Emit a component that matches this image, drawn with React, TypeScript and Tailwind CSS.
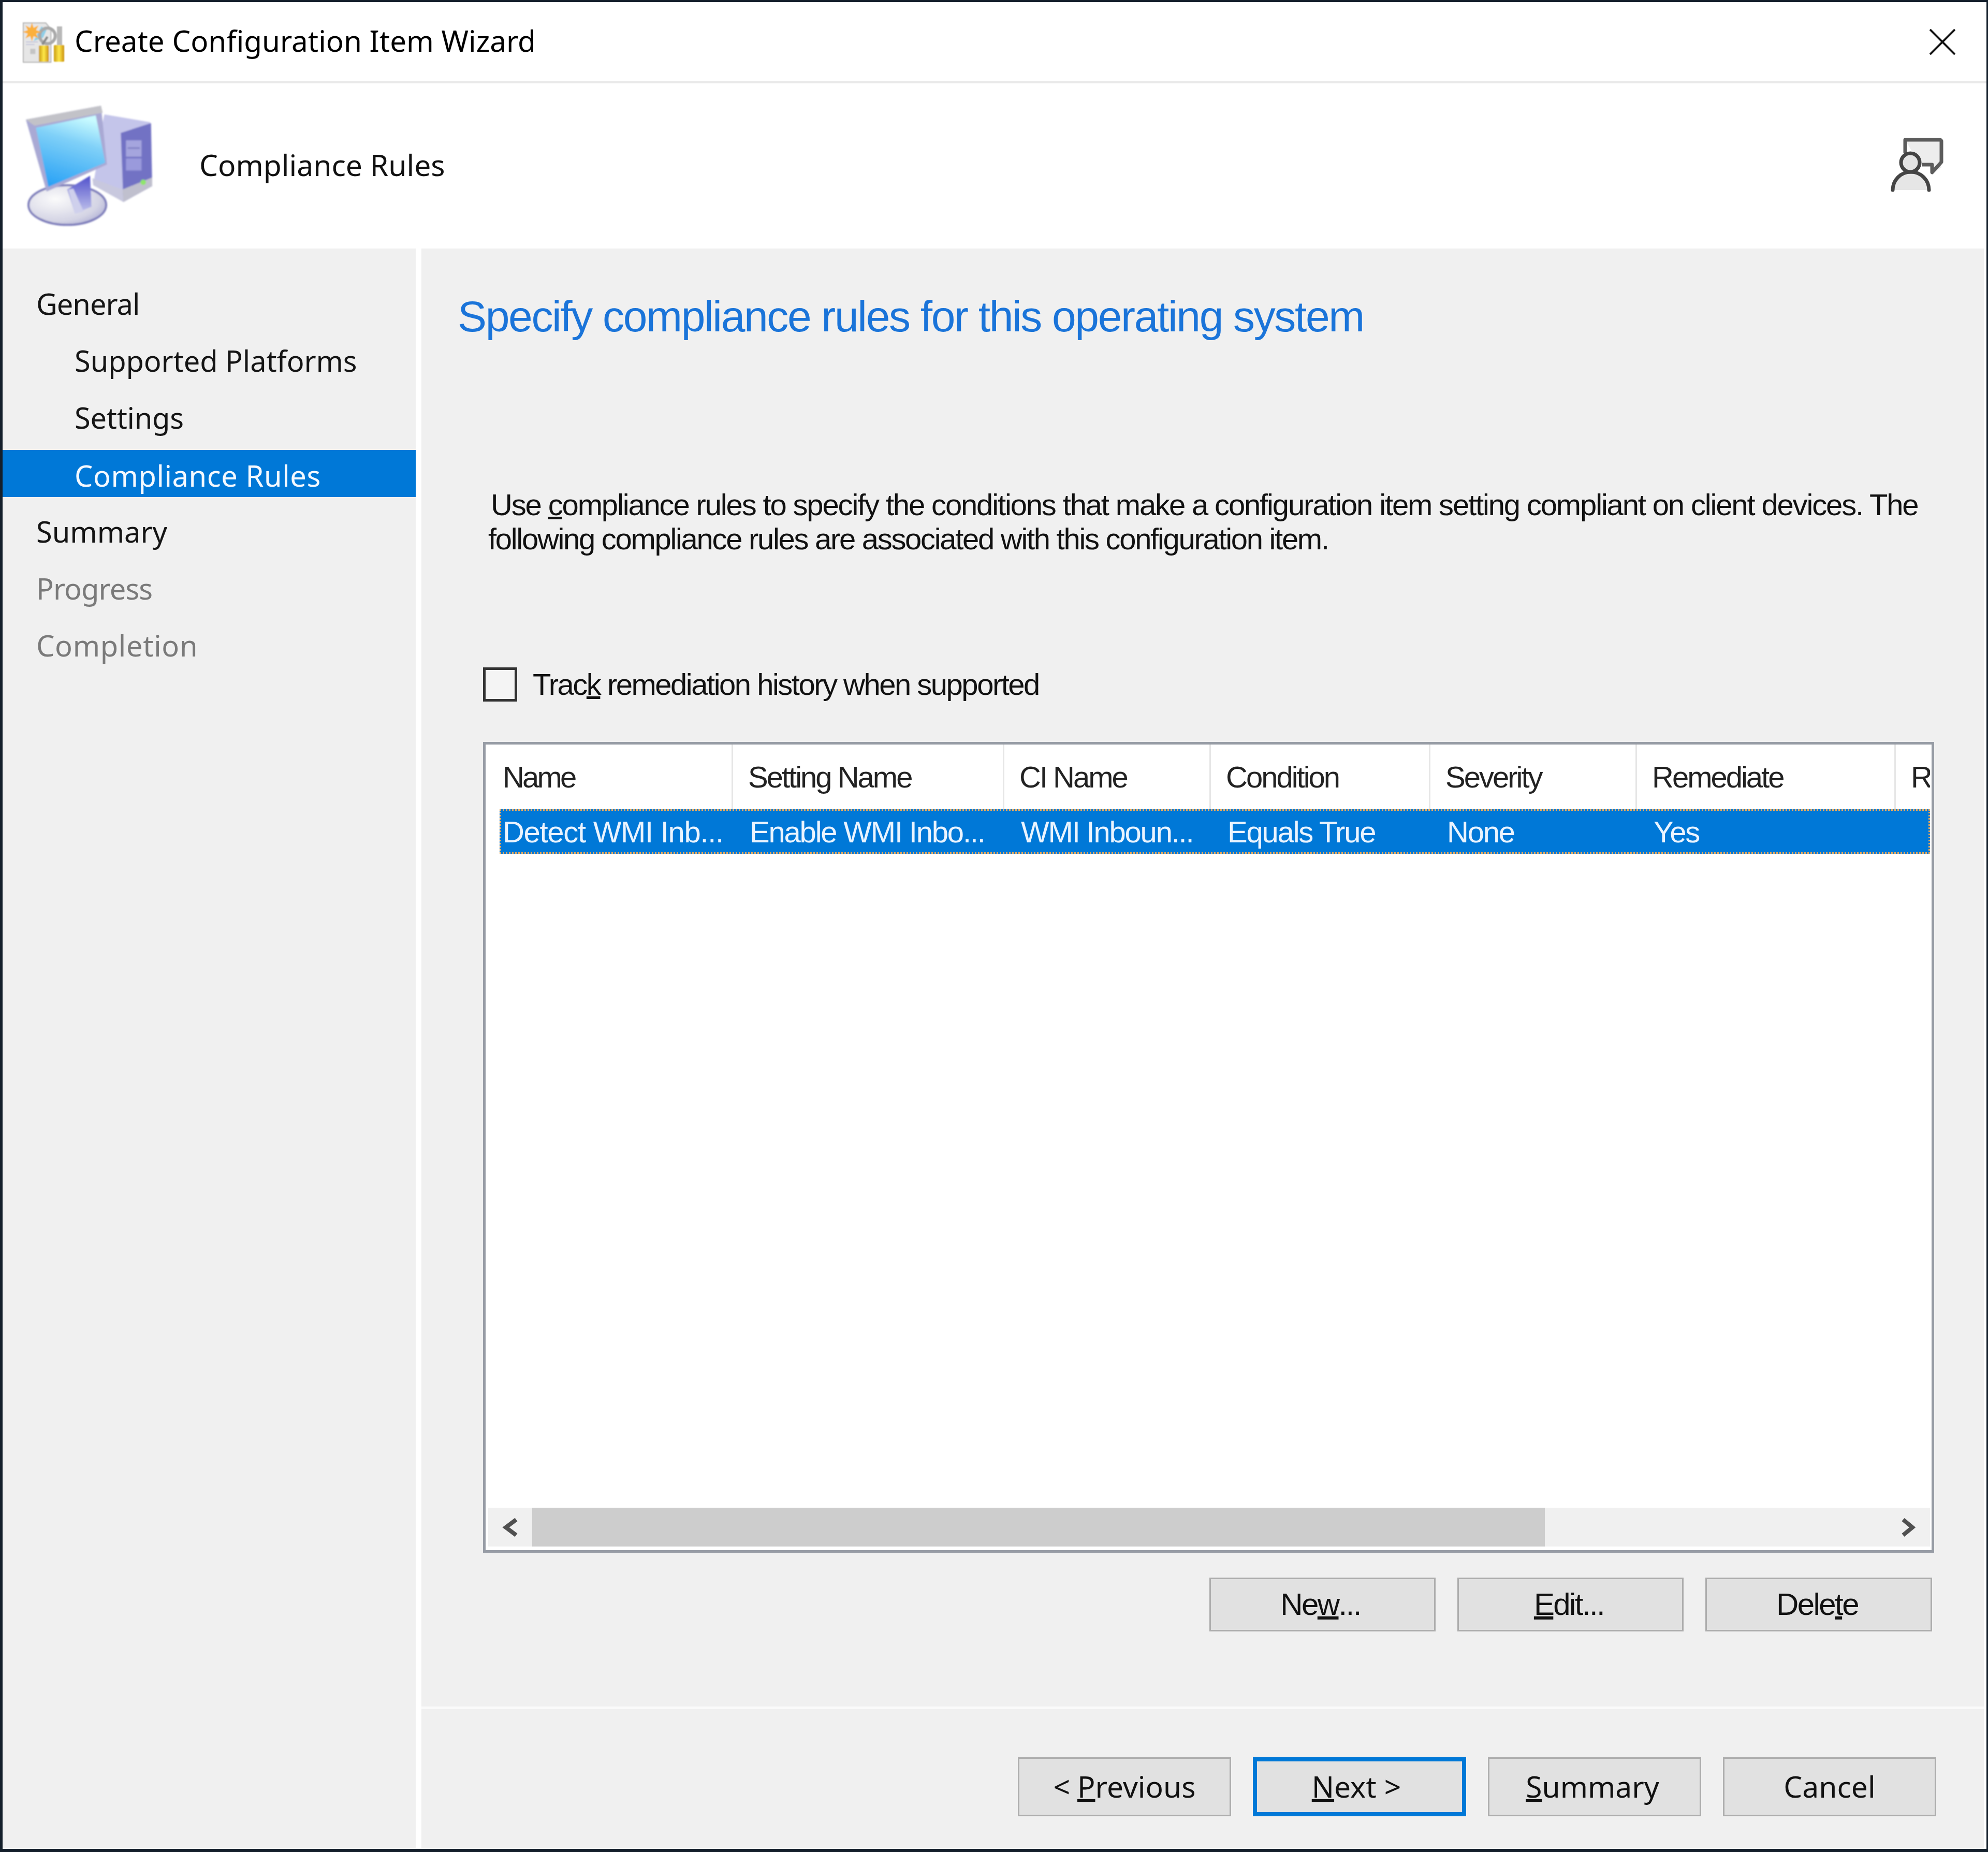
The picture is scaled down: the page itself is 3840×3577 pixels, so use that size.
import { ReactNode } from "react";

const SEGOE = "font-['Noto_Sans',sans-serif]";
const ARIAL = "font-['Liberation_Sans',Arial,sans-serif]";

const STEPS = [
  { label: "General", indent: false, state: "done", track: "tracking-[-1px]" },
  { label: "Supported Platforms", indent: true, state: "done", track: "tracking-[-0.1px]" },
  { label: "Settings", indent: true, state: "done", track: "tracking-[-0.3px]" },
  { label: "Compliance Rules", indent: true, state: "active", track: "tracking-[0.6px]" },
  { label: "Summary", indent: false, state: "done", track: "" },
  { label: "Progress", indent: false, state: "off", track: "tracking-[-0.9px]" },
  { label: "Completion", indent: false, state: "off", track: "tracking-[0.7px]" },
];

const COLUMNS = [
  { head: "Name", value: "Detect WMI Inb..." },
  { head: "Setting Name", value: "Enable WMI Inbo..." },
  { head: "CI Name", value: "WMI Inboun..." },
  { head: "Condition", value: "Equals True" },
  { head: "Severity", value: "None" },
  { head: "Remediate", value: "Yes" },
  { head: "R", value: "" },
];

function AppIcon() {
  return (
    <svg viewBox="0 0 330 300" className="w-[110px] h-[100px] shrink-0">
      <defs>
        <filter id="soft"><feGaussianBlur stdDeviation="3" /></filter>
        <linearGradient id="gold" x1="0" y1="0" x2="1" y2="0">
          <stop offset="0" stopColor="#c99a10" />
          <stop offset="0.5" stopColor="#ffe94a" />
          <stop offset="1" stopColor="#c98f10" />
        </linearGradient>
      </defs>
      <g filter="url(#soft)">
        <path d="M45 40H175L205 75V268H45Z" fill="#e6e6e6" stroke="#b4b4b4" strokeWidth="6" />
        <rect x="85" y="190" width="30" height="30" fill="#c4c4c4" />
        <path d="M60 150h70M60 165h50" stroke="#b9bcd8" strokeWidth="5" />
        <path d="M150 60l30 20-20 45-55 20z" fill="#8ecfe8" />
        <circle cx="185" cy="115" r="45" fill="none" stroke="#a9a9a9" strokeWidth="18" />
        <path d="M185 120l-30 45" stroke="#8a8a8a" strokeWidth="14" />
        <path d="M95 38l10 30 28-14-14 28 30 10-30 10 14 28-28-14-10 30-10-30-28 14 14-28-30-10 30-10-14-28 28 14z" fill="#fbb03c" />
        <rect x="240" y="60" width="30" height="120" fill="#b8b8b8" />
        <rect x="135" y="170" width="58" height="95" rx="6" fill="url(#gold)" />
        <rect x="222" y="168" width="60" height="97" rx="6" fill="url(#gold)" />
      </g>
    </svg>
  );
}

function ComputerIcon() {
  return (
    <svg viewBox="0 0 870 810" className="w-[290px] h-[270px] shrink-0">
      <defs>
        <filter id="soft2"><feGaussianBlur stdDeviation="5" /></filter>
        <linearGradient id="screen" x1="0.6" y1="0" x2="0.3" y2="1">
          <stop offset="0" stopColor="#c9fbff" />
          <stop offset="0.35" stopColor="#7fd0f8" />
          <stop offset="1" stopColor="#2aa2f5" />
        </linearGradient>
        <linearGradient id="neck" x1="0" y1="0" x2="0" y2="1">
          <stop offset="0" stopColor="#5050cc" />
          <stop offset="1" stopColor="#c4c6ec" />
        </linearGradient>
        <radialGradient id="base" cx="0.35" cy="0.35" r="0.8">
          <stop offset="0" stopColor="#fbfbfb" />
          <stop offset="0.7" stopColor="#d4d4e4" />
          <stop offset="1" stopColor="#a9a9d4" />
        </radialGradient>
      </defs>
      <g filter="url(#soft2)">
        <ellipse cx="300" cy="630" rx="225" ry="115" fill="url(#base)" stroke="#7c7cba" strokeWidth="12" />
        <path d="M500 170L515 105 780 150 790 520 625 612 450 510 470 400Z" fill="#c4c5ea" />
        <path d="M610 212L785 155 792 520 625 612Z" fill="#7272c4" />
        <path d="M445 475L620 540 625 612 450 515Z" fill="#c8c8de" />
        <path d="M620 540L792 470 792 520 625 612Z" fill="#c0c0ce" />
        <rect x="640" y="255" width="90" height="95" fill="#a5a5de" />
        <rect x="640" y="360" width="90" height="70" fill="#9a9adc" />
        <path d="M650 300h70" stroke="#7a7ac0" strokeWidth="8" />
        <circle cx="740" cy="498" r="16" fill="#8fe66a" />
        <path d="M300 540L432 460 440 640 345 680Z" fill="url(#neck)" />
        <path d="M305 540L345 680 395 668 335 535Z" fill="#cfd0ec" />
        <path d="M60 135L495 55 530 395 180 552Z" fill="#a9a9d4" />
        <path d="M60 135L495 55 505 95 110 170Z" fill="#c2c2c8" />
        <path d="M118 182L465 110 520 385 190 525Z" fill="url(#screen)" />
      </g>
    </svg>
  );
}

function AssistIcon() {
  return (
    <svg viewBox="0 0 110 110" className="w-[110px] h-[110px] shrink-0" fill="none">
      <path d="M30 7H100V60L82 74V55H58" fill="#ededed" />
      <path d="M30 32V7H97a3 3 0 0 1 3 3V50L82 70V55H62" stroke="#5c5c5c" strokeWidth="7" strokeLinejoin="round" />
      <path d="M6 104a35 35 0 0 1 70 0Z" fill="#e6e6e6" />
      <path d="M6 104a35 35 0 0 1 70 0" stroke="#444" strokeWidth="7" strokeLinecap="round" />
      <circle cx="40" cy="51" r="18" fill="#e4e4e4" stroke="#444" strokeWidth="7" />
    </svg>
  );
}

function Chevron({ dir }: { dir: "left" | "right" }) {
  return (
    <svg viewBox="0 0 32 40" className="w-[32px] h-[40px]" fill="none">
      <path d={dir === "left" ? "M27 5L7 20l20 15" : "M7 5l18 15L7 35"} stroke="#505050" strokeWidth="8" />
    </svg>
  );
}

function PushButton({ children, width, height, primary, className }: { children: ReactNode; width: string; height: string; primary?: boolean; className?: string }) {
  return (
    <div
      className={`${width} ${height} flex items-center justify-center bg-[#e1e1e1] text-[#111] ${
        primary ? "border-[8px] border-[#0078d7]" : "border-[3px] border-[#adadad]"
      } ${className ?? ""}`}
    >
      {children}
    </div>
  );
}

export default function App() {
  return (
    <div className="w-[3840px] h-[3577px] flex flex-col bg-[#141f2b] pt-[4px] pl-[5px] pr-[3px] pb-[6px] overflow-hidden">
      {/* title bar */}
      <div className={`h-[157px] shrink-0 flex items-center bg-white border-b-[4px] border-[#e9e9e9] pl-[25px] pr-[60px] ${SEGOE}`}>
        <AppIcon />
        <span className="ml-[4px] mb-[3px] text-[56.5px] text-black whitespace-nowrap">Create Configuration Item Wizard</span>
        <svg viewBox="0 0 50 50" className="w-[50px] h-[50px] ml-auto" fill="none">
          <path d="M1 1l48 48M49 1L1 49" stroke="#111" strokeWidth="4" />
        </svg>
      </div>

      {/* page header */}
      <div className={`h-[319px] shrink-0 flex items-center bg-white pl-[25px] pr-[77px] ${SEGOE}`}>
        <ComputerIcon />
        <span className="ml-[65px] mt-[-3px] text-[57px] text-[#111] whitespace-nowrap">Compliance Rules</span>
        <div className="ml-auto mt-[-6px]"><AssistIcon /></div>
      </div>

      <div className="flex-1 flex min-h-0 bg-white">
        {/* steps */}
        <div className={`w-[809px] shrink-0 bg-[#f0f0f0] border-r-[11px] border-white pt-[51px] text-[56px] ${SEGOE}`}>
          {STEPS.map((step) =>
            step.state === "active" ? (
              <div key={step.label} className={`h-[91px] mt-[8px] mb-[11px] pt-[6px] pl-[139px] bg-[#0078d7] text-[#f4f9ff] flex items-center ${step.track}`}>
                {step.label}
              </div>
            ) : (
              <div
                key={step.label}
                className={`h-[110px] flex items-center ${step.indent ? "pl-[139px]" : "pl-[65px]"} ${step.track} ${
                  step.state === "off" ? "text-[#7a7a7a]" : "text-[#151515]"
                }`}
              >
                {step.label}
              </div>
            )
          )}
        </div>

        {/* main panel */}
        <div className="flex-1 min-w-0 flex flex-col bg-[#f0f0f0] mr-[5px]">
          <h1 className={`mt-[79px] ml-[70px] text-[84px] leading-[104px] font-normal text-[#1a74d9] tracking-[-2.35px] whitespace-nowrap ${ARIAL}`}>
            Specify compliance rules for this operating system
          </h1>
          <p className={`mt-[279px] ml-[129px] w-[2800px] text-[58px] leading-[66px] text-[#111] indent-[5px] tracking-[-2.3px] whitespace-nowrap ${ARIAL}`}>
            <span className="tracking-[-2.15px]">Use <u>c</u>ompliance rules to specify the conditions that make a configuration item setting compliant on client devices. The</span>
            <br />
            following compliance rules are associated with this configuration item.
          </p>
          <div className={`mt-[204px] ml-[119px] flex items-center text-[58px] text-[#111] tracking-[-2.5px] whitespace-nowrap ${ARIAL}`}>
            <div className="w-[66px] h-[66px] border-[5px] border-[#333] bg-[#f4f4f4]" />
            <span className="ml-[30px]">Trac<u>k</u> remediation history when supported</span>
          </div>

          {/* rules list */}
          <div className={`mt-[68px] ml-[119px] w-[2803px] h-[1566px] shrink-0 flex flex-col border-[5px] border-[#979ca5] bg-white text-[58px] ${ARIAL}`}>
            <div className="h-[125px] shrink-0 ml-[27px] mr-[3px] grid grid-cols-[448px_524px_399px_424px_399px_500px_1fr] overflow-hidden text-[#222] tracking-[-3px]">
              {COLUMNS.map((col, i) => (
                <div key={col.head} className={`flex items-center whitespace-nowrap overflow-hidden ${i === 0 ? "pl-[6px] tracking-[-3.8px]" : "pl-[29px] border-l-[3px] border-[#e6e6e6]"}`}>
                  {col.head}
                </div>
              ))}
            </div>
            <div className="h-[86px] shrink-0 ml-[27px] mr-[3px] grid grid-cols-[448px_524px_399px_424px_399px_500px_1fr] bg-[#0078d7] text-[#eaf4ff] tracking-[-2.2px] outline-[3px] outline-dotted -outline-offset-[3px] outline-[#e8a95c]">
              {COLUMNS.map((col, i) => (
                <div key={col.head} className={`flex items-center whitespace-nowrap overflow-hidden ${i === 0 ? "pl-[6px] tracking-[-1.3px]" : "pl-[35px]"}`}>
                  {col.value}
                </div>
              ))}
            </div>
            <div className="flex-1" />
            <div className="h-[75px] shrink-0 ml-[5px] mr-[3px] mb-[7px] flex items-stretch bg-[#f0f0f0]">
              <div className="w-[85px] shrink-0 flex items-center justify-center"><Chevron dir="left" /></div>
              <div className="w-[1956px] shrink-0 bg-[#cdcdcd]" />
              <div className="flex-1 flex items-center justify-end pr-[27px]"><Chevron dir="right" /></div>
            </div>
          </div>

          <div className={`mt-[48px] pr-[100px] flex justify-end gap-[42px] text-[60px] tracking-[-2.6px] ${ARIAL}`}>
            <PushButton width="w-[437px]" height="h-[104px]" className="pr-[8px]">Ne<u>w</u>...</PushButton>
            <PushButton width="w-[437px]" height="h-[104px]" className="pr-[6px]"><u>E</u>dit...</PushButton>
            <PushButton width="w-[438px]" height="h-[104px]" className="pr-[6px]">Dele<u>t</u>e</PushButton>
          </div>

          <div className={`mt-[145px] flex-1 border-t-[5px] border-[#fafafa] pt-[93px] pr-[92px] flex justify-end items-start gap-[42px] text-[57px] ${SEGOE}`}>
            <PushButton width="w-[412px]" height="h-[114px]">&lt; <u className="ml-[14px]">P</u>revious</PushButton>
            <PushButton width="w-[412px]" height="h-[114px]" primary className="pr-[12px]"><u>N</u>ext &gt;</PushButton>
            <PushButton width="w-[412px]" height="h-[114px]" className="pr-[8px]"><u>S</u>ummary</PushButton>
            <PushButton width="w-[412px]" height="h-[114px]">Cancel</PushButton>
          </div>
        </div>
      </div>
    </div>
  );
}
